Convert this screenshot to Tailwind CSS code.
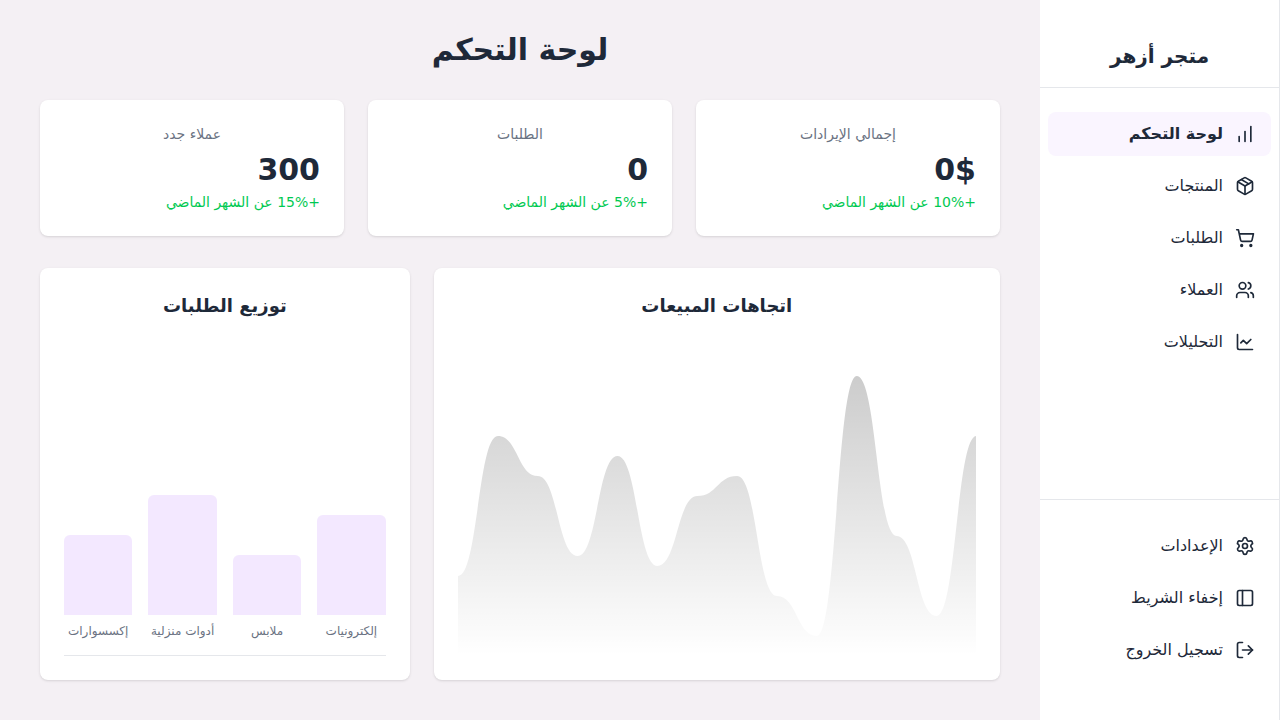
<!DOCTYPE html>
<html lang="ar" dir="rtl">
<head>
<meta charset="utf-8">
<title>متجر أزهر</title>
<script src="https://cdn.jsdelivr.net/npm/@tailwindcss/browser@4"></script>
</head>
<body class="flex h-screen overflow-hidden bg-[#f4f0f4] font-['DejaVu_Sans',sans-serif] text-gray-800">
<aside class="flex w-60 shrink-0 flex-col border-r border-gray-200 bg-white">
  <div class="border-b border-gray-200 px-6 pt-[42px] pb-[17px]">
    <h2 class="text-center text-xl font-bold">متجر أزهر</h2>
  </div>
  <nav class="flex grow flex-col gap-2 px-2 pt-6">
    <a class="flex h-11 items-center gap-3 rounded-lg bg-purple-50 px-4 font-bold">
      <svg class="size-5" viewBox="0 0 24 24" fill="none" stroke="currentColor" stroke-width="2" stroke-linecap="round" stroke-linejoin="round"><path d="M5 21v-6"/><path d="M12 21V9"/><path d="M19 21V3"/></svg>
      <span>لوحة التحكم</span>
    </a>
    <a class="flex h-11 items-center gap-3 rounded-lg px-4">
      <svg class="size-5" viewBox="0 0 24 24" fill="none" stroke="currentColor" stroke-width="2" stroke-linecap="round" stroke-linejoin="round"><path d="M11 21.73a2 2 0 0 0 2 0l7-4A2 2 0 0 0 21 16V8a2 2 0 0 0-1-1.73l-7-4a2 2 0 0 0-2 0l-7 4A2 2 0 0 0 3 8v8a2 2 0 0 0 1 1.73z"/><path d="M12 22V12"/><path d="M3.29 7 12 12l8.71-5"/><path d="m7.5 4.27 9 5.15"/></svg>
      <span>المنتجات</span>
    </a>
    <a class="flex h-11 items-center gap-3 rounded-lg px-4">
      <svg class="size-5" viewBox="0 0 24 24" fill="none" stroke="currentColor" stroke-width="2" stroke-linecap="round" stroke-linejoin="round"><circle cx="8" cy="21" r="1"/><circle cx="19" cy="21" r="1"/><path d="M2.05 2.05h2l2.66 12.42a2 2 0 0 0 2 1.58h9.78a2 2 0 0 0 1.95-1.57l1.65-7.43H5.12"/></svg>
      <span>الطلبات</span>
    </a>
    <a class="flex h-11 items-center gap-3 rounded-lg px-4">
      <svg class="size-5" viewBox="0 0 24 24" fill="none" stroke="currentColor" stroke-width="2" stroke-linecap="round" stroke-linejoin="round"><path d="M16 21v-2a4 4 0 0 0-4-4H6a4 4 0 0 0-4 4v2"/><path d="M16 3.128a4 4 0 0 1 0 7.744"/><path d="M22 21v-2a4 4 0 0 0-3-3.87"/><circle cx="9" cy="7" r="4"/></svg>
      <span>العملاء</span>
    </a>
    <a class="flex h-11 items-center gap-3 rounded-lg px-4">
      <svg class="size-5" viewBox="0 0 24 24" fill="none" stroke="currentColor" stroke-width="2" stroke-linecap="round" stroke-linejoin="round"><path d="M3 3v16a2 2 0 0 0 2 2h16"/><path d="m19 9-5 5-4-4-3 3"/></svg>
      <span>التحليلات</span>
    </a>
  </nav>
  <div class="flex flex-col gap-2 border-t border-gray-200 px-2 pt-6 pb-12">
    <a class="flex h-11 items-center gap-3 rounded-lg px-4">
      <svg class="size-5" viewBox="0 0 24 24" fill="none" stroke="currentColor" stroke-width="2" stroke-linecap="round" stroke-linejoin="round"><path d="M9.671 4.136a2.34 2.34 0 0 1 4.659 0 2.34 2.34 0 0 0 3.319 1.915 2.34 2.34 0 0 1 2.33 4.033 2.34 2.34 0 0 0 0 3.831 2.34 2.34 0 0 1-2.33 4.033 2.34 2.34 0 0 0-3.319 1.915 2.34 2.34 0 0 1-4.659 0 2.34 2.34 0 0 0-3.32-1.915 2.34 2.34 0 0 1-2.33-4.033 2.34 2.34 0 0 0 0-3.831A2.34 2.34 0 0 1 6.35 6.051a2.34 2.34 0 0 0 3.319-1.915"/><circle cx="12" cy="12" r="3"/></svg>
      <span>الإعدادات</span>
    </a>
    <a class="flex h-11 items-center gap-3 rounded-lg px-4">
      <svg class="size-5" viewBox="0 0 24 24" fill="none" stroke="currentColor" stroke-width="2" stroke-linecap="round" stroke-linejoin="round"><rect width="18" height="18" x="3" y="3" rx="2"/><path d="M9 3v18"/></svg>
      <span>إخفاء الشريط</span>
    </a>
    <a class="flex h-11 items-center gap-3 rounded-lg px-4">
      <svg class="size-5" viewBox="0 0 24 24" fill="none" stroke="currentColor" stroke-width="2" stroke-linecap="round" stroke-linejoin="round"><path d="m16 17 5-5-5-5"/><path d="M21 12H9"/><path d="M9 21H5a2 2 0 0 1-2-2V5a2 2 0 0 1 2-2h4"/></svg>
      <span>تسجيل الخروج</span>
    </a>
  </div>
</aside>

<main class="min-w-0 grow px-10 py-8">
  <h1 class="mb-8 text-center text-3xl font-bold">لوحة التحكم</h1>
  <section class="mb-8 grid grid-cols-3 gap-6">
    <div class="rounded-lg bg-white p-6 shadow-sm">
      <h3 class="mb-2 text-center text-sm text-gray-500">إجمالي الإيرادات</h3>
      <p class="mb-1 text-3xl font-bold">0$</p>
      <p class="text-sm text-green-500">+10% عن الشهر الماضي</p>
    </div>
    <div class="rounded-lg bg-white p-6 shadow-sm">
      <h3 class="mb-2 text-center text-sm text-gray-500">الطلبات</h3>
      <p class="mb-1 text-3xl font-bold">0</p>
      <p class="text-sm text-green-500">+5% عن الشهر الماضي</p>
    </div>
    <div class="rounded-lg bg-white p-6 shadow-sm">
      <h3 class="mb-2 text-center text-sm text-gray-500">عملاء جدد</h3>
      <p class="mb-1 text-3xl font-bold">300</p>
      <p class="text-sm text-green-500">+15% عن الشهر الماضي</p>
    </div>
  </section>
  <section class="grid grid-cols-5 gap-6">
    <div class="col-span-3 rounded-lg bg-white p-6 shadow-sm">
      <h3 class="mb-4 text-center text-lg font-bold">اتجاهات المبيعات</h3>
      <svg class="block h-80 w-full" viewBox="0 0 520 320" preserveAspectRatio="none">
        <defs><linearGradient id="area" x1="0" y1="0" x2="0" y2="1"><stop offset="0" stop-color="#000" stop-opacity="0.2"/><stop offset="1" stop-color="#000" stop-opacity="0"/></linearGradient></defs>
        <path fill="url(#area)" d="M0 240C20 240 20 100 40 100C60 100 60 140 80 140C100 140 100 220 120 220C140 220 140 120 160 120C180 120 180 230 200 230C220 230 220 160 240 160C260 160 260 140 280 140C300 140 300 260 320 260C340 260 340 300 360 300C380 300 380 40 400 40C420 40 420 200 440 200C460 200 460 280 480 280C500 280 500 100 520 100V320H0Z"/>
      </svg>
    </div>
    <div class="col-span-2 rounded-lg bg-white p-6 shadow-sm">
      <h3 class="mb-4 text-center text-lg font-bold">توزيع الطلبات</h3>
      <div class="flex h-80 items-end gap-4 border-b border-gray-200 pb-4 text-center text-xs text-gray-500">
        <div class="min-w-0 flex-1"><div class="mb-2 h-[100px] rounded-t-md bg-purple-100"></div><p class="whitespace-nowrap">إلكترونيات</p></div>
        <div class="min-w-0 flex-1"><div class="mb-2 h-[60px] rounded-t-md bg-purple-100"></div><p class="whitespace-nowrap">ملابس</p></div>
        <div class="min-w-0 flex-1"><div class="mb-2 h-[120px] rounded-t-md bg-purple-100"></div><p class="whitespace-nowrap">أدوات منزلية</p></div>
        <div class="min-w-0 flex-1"><div class="mb-2 h-[80px] rounded-t-md bg-purple-100"></div><p class="whitespace-nowrap">إكسسوارات</p></div>
      </div>
    </div>
  </section>
</main>
</body>
</html>
